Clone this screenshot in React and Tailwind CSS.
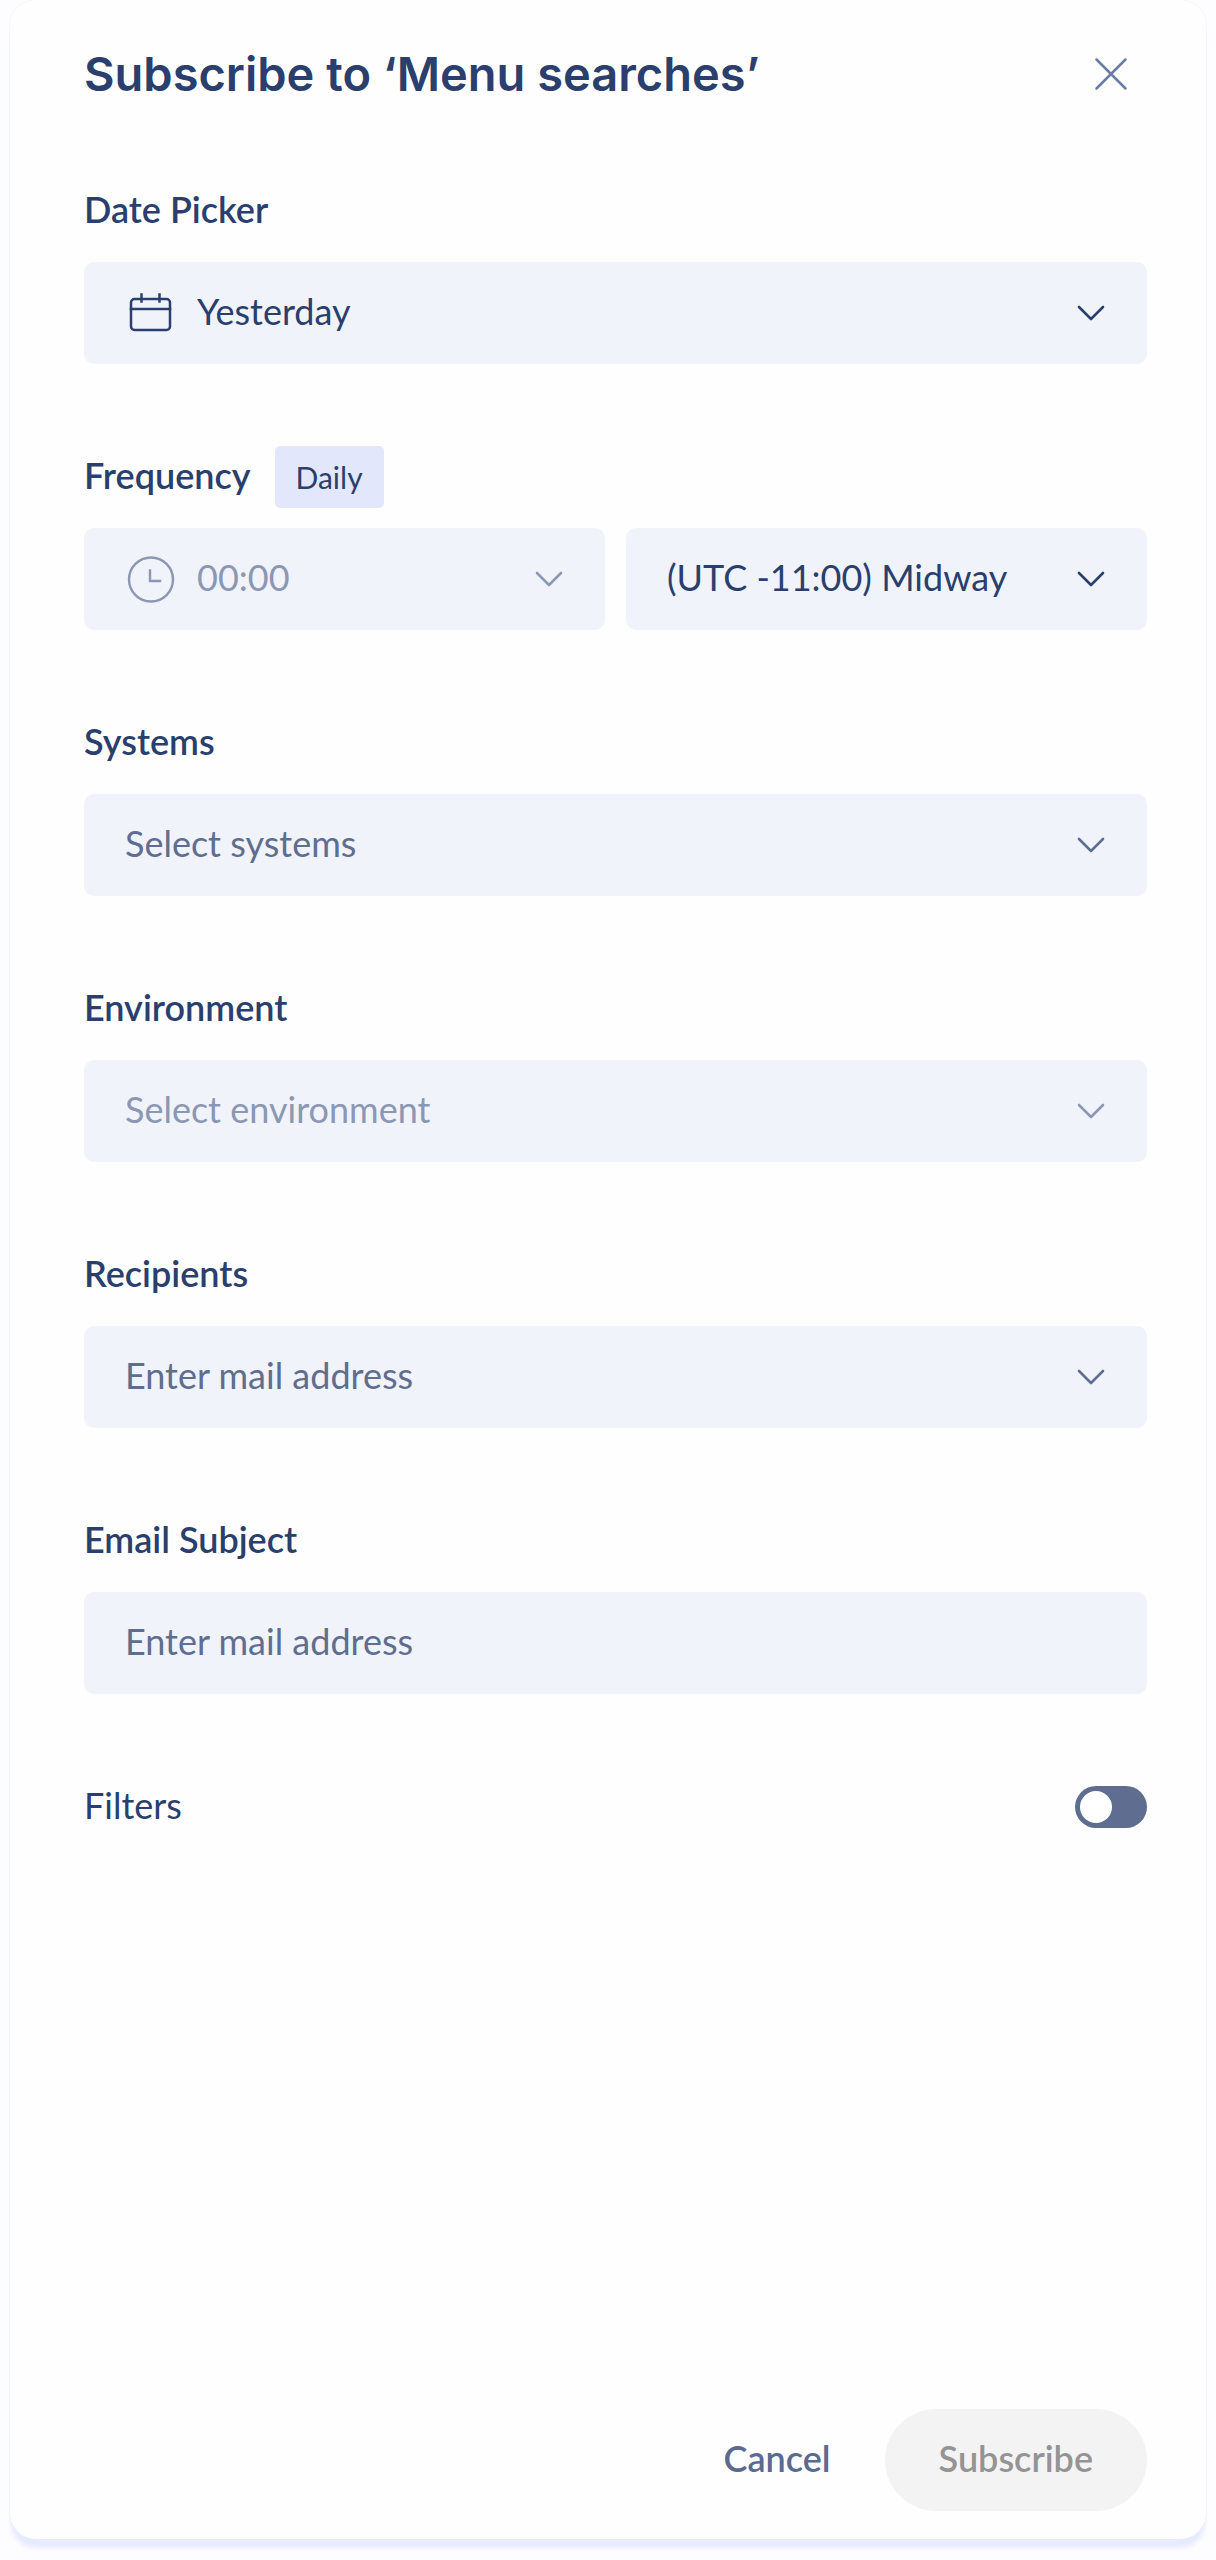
const fieldClass =
  'w-full h-[102px] rounded-[10px] bg-[#f0f3fa] pb-1 text-[36px] appearance-none outline-none focus:ring-2 focus:ring-[#c5cff0]';

function Chevron({ className = 'text-[#5f6e90]' }) {
  return (
    <svg
      className={`pointer-events-none absolute right-[42px] top-[42px] h-[18px] w-[28px] ${className}`}
      viewBox="0 0 28 18"
      fill="none"
      stroke="currentColor"
      strokeWidth="2.6"
      strokeLinecap="round"
      strokeLinejoin="round"
    >
      <path d="M2 3 14 15 26 3" />
    </svg>
  );
}

function CalendarIcon() {
  return (
    <svg
      className="pointer-events-none absolute left-[44px] top-[28px] h-[42px] w-[44px] text-[#2a3f6d]"
      viewBox="0 0 44 42"
      fill="none"
      stroke="currentColor"
      strokeWidth="2.5"
      strokeLinecap="square"
    >
      <rect x="3" y="9" width="39" height="31" rx="3.5" />
      <path d="M3 19H42M13.5 4.5v7M31.5 4.5v7" />
    </svg>
  );
}

function ClockIcon() {
  return (
    <svg
      className="pointer-events-none absolute left-[43px] top-[27px] h-[48px] w-[48px] text-[#8b97b3]"
      viewBox="0 0 48 48"
      fill="none"
      stroke="currentColor"
      strokeWidth="2.4"
      strokeLinecap="square"
    >
      <circle cx="24" cy="24.5" r="22" />
      <path d="M23 15.5V26h10" />
    </svg>
  );
}

function Field({ id, label, tag, children }) {
  return (
    <section className="flex flex-col gap-5">
      <div className="flex h-[62px] items-center gap-6">
        <label htmlFor={id} className="pb-1 text-[36px] leading-[44px] font-semibold">
          {label}
        </label>
        {tag && (
          <span className="flex h-[62px] items-center rounded-[5px] bg-[#e2e7fc] px-[21px] text-[30px]">{tag}</span>
        )}
      </div>
      {children}
    </section>
  );
}

export default function App() {
  return (
    <div className="flex min-h-screen flex-col bg-[#fdfdff] px-[10px] pb-[21px] font-['Lato',sans-serif] text-[#2a3f6d]">
      <form
        className="flex grow flex-col rounded-[26px] bg-[#fefefe] pr-[59px] pb-[28px] pl-[74px] shadow-[0_0_2px_#e6ecfb,0_10px_4px_-1px_#e6ebfe]"
        onSubmit={(e) => e.preventDefault()}
      >
        <header className="flex h-[148px] items-center justify-between">
          <h1 className="font-['Inter',sans-serif] text-[47px] font-semibold">Subscribe to ‘Menu searches’</h1>
          <button type="button" aria-label="Close" className="mr-[18px] text-[#6a7ca6]">
            <svg
              className="h-9 w-9"
              viewBox="0 0 36 36"
              fill="none"
              stroke="currentColor"
              strokeWidth="2.5"
              strokeLinecap="round"
            >
              <path d="M3.5 3.5 32.5 32.5M32.5 3.5 3.5 32.5" />
            </svg>
          </button>
        </header>

        <div className="mt-8 flex flex-col gap-[82px]">
          <Field id="date" label="Date Picker">
            <div className="relative">
              <select id="date" className={`${fieldClass} pl-[113px] pr-24`}>
                <option>Yesterday</option>
              </select>
              <CalendarIcon />
              <Chevron className="text-[#2a3f6d]" />
            </div>
          </Field>

          <Field id="time" label="Frequency" tag="Daily">
            <div className="grid grid-cols-2 gap-[21px]">
              <div className="relative">
                <select
                  id="time"
                  disabled
                  className={`${fieldClass} pl-[113px] pr-24 text-[#8b97b3] disabled:opacity-100`}
                >
                  <option>00:00</option>
                </select>
                <ClockIcon />
                <Chevron className="text-[#8b97b3]" />
              </div>
              <div className="relative">
                <select aria-label="Time zone" className={`${fieldClass} pl-[41px] pr-20`}>
                  <option>(UTC -11:00) Midway</option>
                </select>
                <Chevron className="text-[#2a3f6d]" />
              </div>
            </div>
          </Field>

          <Field id="systems" label="Systems">
            <div className="relative">
              <select id="systems" className={`${fieldClass} pl-[41px] pr-24 text-[#5f6e90]`}>
                <option>Select systems</option>
              </select>
              <Chevron />
            </div>
          </Field>

          <Field id="environment" label="Environment">
            <div className="relative">
              <select
                id="environment"
                disabled
                className={`${fieldClass} pl-[41px] pr-24 text-[#8b97b3] disabled:opacity-100`}
              >
                <option>Select environment</option>
              </select>
              <Chevron className="text-[#8b97b3]" />
            </div>
          </Field>

          <Field id="recipients" label="Recipients">
            <div className="relative">
              <input
                id="recipients"
                type="email"
                placeholder="Enter mail address"
                className={`${fieldClass} pl-[41px] pr-24 placeholder:text-[#5f6e90]`}
              />
              <Chevron />
            </div>
          </Field>

          <Field id="subject" label="Email Subject">
            <input
              id="subject"
              type="text"
              placeholder="Enter mail address"
              className={`${fieldClass} px-[41px] placeholder:text-[#5f6e90]`}
            />
          </Field>

          <div className="flex h-[62px] items-center justify-between">
            <label htmlFor="filters" className="pb-1 text-[36px] leading-[44px]">
              Filters
            </label>
            <input
              id="filters"
              type="checkbox"
              role="switch"
              className="flex h-[42px] w-[72px] appearance-none items-center rounded-full bg-[#5f6e90] px-[5px] before:size-[32px] before:rounded-full before:bg-white before:content-[''] checked:justify-end"
            />
          </div>
        </div>

        <footer className="mt-auto flex items-center justify-end gap-[54px] pt-20 text-[36px] font-semibold">
          <button type="button" className="pb-1 text-[#5a6a91]">
            Cancel
          </button>
          <button type="submit" disabled className="h-[102px] rounded-full bg-[#f3f3f3] px-[54px] pb-1 text-[#949494]">
            Subscribe
          </button>
        </footer>
      </form>
    </div>
  );
}
